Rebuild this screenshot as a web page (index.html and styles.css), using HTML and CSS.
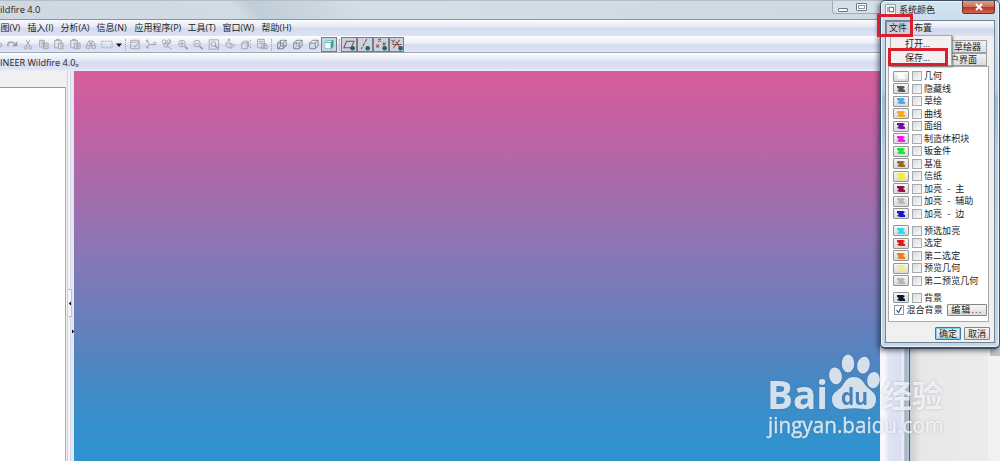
FILE: index.html
```html
<!DOCTYPE html>
<html lang="zh-CN">
<head>
<meta charset="utf-8">
<title>Wildfire 4.0</title>
<link rel="stylesheet" href="styles.css">
</head>
<body>
<div class="screen">
  <main class="app">
    <header class="titlebar"><span>ildfire 4.0</span><div class="winbtns"><i class="min"></i><i class="max"></i></div></header>
    <nav class="menubar"><span>图(V)</span><span>插入(I)</span><span>分析(A)</span><span>信息(N)</span><span>应用程序(P)</span><span>工具(T)</span><span>窗口(W)</span><span>帮助(H)</span></nav>
    <div class="toolbar">
      <svg class="edge" viewBox="0 0 4 16"><circle cx="0" cy="8" r="1.8"/></svg>
      <svg class="ic" viewBox="0 0 16 16"><path stroke-width="1.500" d="M4 10C2 5 9 4 12 8M13 5v4H9"/></svg>
      <svg class="ic" viewBox="0 0 16 16"><path d="M6 3l4 7M10 3L6 10"/><circle cx="5.500" cy="11.500" r="1.500"/><circle cx="10.500" cy="11.500" r="1.500"/></svg>
      <svg class="ic" viewBox="0 0 16 16"><path class="soft" d="M3.500 3.500h5v7h-5zM7.500 6.500h5v6h-5z"/><path d="M5 5.500h3M5 7.500h2M9 8.500h3M9 10.500h3"/></svg>
      <svg class="ic" viewBox="0 0 16 16"><path class="soft" d="M3.500 3.500h7v8h-7z"/><path class="soft" d="M7.500 6.500h5v6h-5z"/><path d="M5.500 3.500v-1h3v1M9 8.500h3M9 10.500h3"/></svg>
      <svg class="ic" viewBox="0 0 16 16"><path class="soft" d="M3.500 3.500h7v8h-7z"/><path class="soft" d="M7.500 6.500h6v6h-6z"/><path d="M5.500 3.500v-1h3v1M9 8.500h4M9 10.500h4M10.500 7v5"/></svg>
      <svg class="ic" viewBox="0 0 16 16"><path d="M6 4L3 9v3h4V4zM10 4l3 5v3H9V4zM7 7h2M4 9h3M9 9h3"/></svg>
      <svg class="ic" viewBox="0 0 16 16"><path stroke-dasharray="2 1.200" d="M2.500 4.500h11v7h-11z"/></svg>
      <svg class="drop" viewBox="0 0 8 16"><path d="M1 6.500h6L4 10z"/></svg>
      <i class="sep first"></i>
      <svg class="ic" viewBox="0 0 16 16"><path d="M3.500 3.500h9v9h-9zM3.500 5.500h9M7 9l1 2 4-5"/></svg>
      <svg class="ic" viewBox="0 0 16 16"><path d="M4 4l2 4-2 3M6 8h7"/><circle cx="4" cy="4" r="1"/><circle cx="12" cy="7" r="1.300"/><circle cx="4" cy="11" r="1"/></svg>
      <svg class="ic" viewBox="0 0 16 16"><circle cx="5" cy="5" r="2"/><circle cx="10" cy="5" r="2"/><circle cx="7" cy="9" r="2"/><path d="M9 10l4 3M12 3l-4 7"/></svg>
      <svg class="ic" viewBox="0 0 16 16"><circle cx="7" cy="7" r="3.500"/><path d="M5 7h4M7 5v4"/><path stroke-width="2" d="M10 10l3 3"/></svg>
      <svg class="ic" viewBox="0 0 16 16"><circle cx="7" cy="7" r="3.500"/><path d="M5 7h4"/><path stroke-width="2" d="M10 10l3 3"/></svg>
      <svg class="ic" viewBox="0 0 16 16"><path d="M3 3h10v10H3z"/><circle cx="7.500" cy="7.500" r="2.500"/><path stroke-width="1.500" d="M9 9l3 3"/></svg>
      <svg class="ic" viewBox="0 0 16 16"><path d="M4 6l5 1v5l-5-2zM7 6V2M9 7l4 2-4 3M5.500 4L7 2l1.500 2"/></svg>
      <svg class="ic" viewBox="0 0 16 16"><path d="M3.500 6.500h6v6h-6zM3.500 6.500l2-2h5l-1 2M11 5v6M13 3v2M13 7v1M13 10v2"/></svg>
      <svg class="ic" viewBox="0 0 16 16"><path class="soft" d="M3.500 2.500h7v9h-7z"/><path d="M5 5h4M5 7h3M7.500 8.500h6v4h-6zM9 8V7h3v1"/><circle cx="10.500" cy="10.500" r="1"/></svg>
      <i class="sep gap"></i>
      <svg class="ic dark" viewBox="0 0 16 16"><path d="M3.500 6.500h6v6h-6zM6.500 3.500h6v6h-6zM3.500 6.500l3-3M9.500 6.500l3-3M3.500 12.500l3-3M9.500 12.500l3-3"/></svg>
      <svg class="ic dark" viewBox="0 0 16 16"><path d="M3.500 6.500h6v6h-6zM3.500 6.500l3-3h6v6l-3 3M9.500 6.500l3-3"/><path opacity=".4" d="M6.500 4v5.500h5M6.500 9.500l-3 3"/></svg>
      <svg class="ic dark" viewBox="0 0 16 16"><path d="M3.500 6.500h6v6h-6zM3.500 6.500l3-3h6v6l-3 3M9.500 6.500l3-3"/></svg>
      <svg class="ic on" viewBox="1.500 1.500 13 13"><path fill="#fff" stroke="#8cc" d="M4 6h6v6H4z"/><path fill="#bff" stroke="#6bb" d="M4 6l2-2h6l-2 2z"/><path fill="#299f98" stroke="#299f98" d="M10.500 6L12 4v6l-1.500 2z"/></svg>
      <i class="sep last"></i>
      <svg class="ic on datum" viewBox="1 1 14 14"><path d="M5.500 4.500h8l-3 7h-8z"/><circle class="eye" cx="12" cy="12" r="1.900"/></svg>
      <svg class="ic on datum" viewBox="1 1 14 14"><path stroke-dasharray="4 1" d="M10 2L4 13"/><circle class="eye" cx="11" cy="12" r="1.900"/></svg>
      <svg class="ic on datum" viewBox="1 1 14 14"><path d="M5 2l3 3M8 2L5 5M3 8l3 3M6 8l-3 3M10 6l3 3M13 6l-3 3"/><circle class="eye" cx="12" cy="12" r="1.900"/></svg>
      <svg class="ic on datum" viewBox="1 1 14 14"><path d="M3 8h10M11 3l-7 9M7 5l4 6"/><path stroke="#666" d="M2 3l2 2 2-2M4 5v2"/><circle class="eye" cx="12" cy="12" r="1.900"/></svg>
    </div>
    <div class="message">INEER Wildfire 4.0。</div>
    <section class="work">
      <aside class="tree"><div></div></aside>
      <div class="splitter"><i></i><svg viewBox="0 0 7 50"><path d="M3 14.500v4L.8 16.500zM4 42.500v4L6.200 44.500z"/></svg></div>
      <div class="canvas"></div>
      <div class="scroll"></div>
      <div class="outside"><i></i></div>
    </section>
  </main>

  <section class="dialog">
    <header class="dtitle"><svg viewBox="0 0 12 12"><path d="M.5.5h11v11H.5z" fill="#f8fbfd" stroke="#8199ab"/><path d="M4.500 3.500h5v5h-5z" fill="#fff" stroke="#356"/><path d="M3 3v6" stroke="#d66"/></svg><span>系统颜色</span><b class="close"><svg viewBox="0 0 10 8"><path d="M2 1l6 6M8 1L2 7"/></svg></b></header>
    <div class="dbody">
      <nav class="dmenu"><span class="active">文件</span><span>布置</span></nav>
      <div class="tabs"><span>草绘器</span><span>户界面</span></div>
      <div class="list">
        <div class="row"><b class="sw c1"><svg viewBox="0 0 10 8"><path d="M1 1h6l2 1-2 2 2 1v2H4L1 6l2-2-2-1z"/></svg></b><i class="cb"></i><span>几何</span></div>
        <div class="row"><b class="sw c2"><svg viewBox="0 0 10 8"><path d="M1 1h6l2 1-2 2 2 1v2H4L1 6l2-2-2-1z"/></svg></b><i class="cb"></i><span>隐藏线</span></div>
        <div class="row"><b class="sw c3"><svg viewBox="0 0 10 8"><path d="M1 1h6l2 1-2 2 2 1v2H4L1 6l2-2-2-1z"/></svg></b><i class="cb"></i><span>草绘</span></div>
        <div class="row"><b class="sw c4"><svg viewBox="0 0 10 8"><path d="M1 1h6l2 1-2 2 2 1v2H4L1 6l2-2-2-1z"/></svg></b><i class="cb"></i><span>曲线</span></div>
        <div class="row"><b class="sw c5"><svg viewBox="0 0 10 8"><path d="M1 1h6l2 1-2 2 2 1v2H4L1 6l2-2-2-1z"/></svg></b><i class="cb"></i><span>面组</span></div>
        <div class="row"><b class="sw c6"><svg viewBox="0 0 10 8"><path d="M1 1h6l2 1-2 2 2 1v2H4L1 6l2-2-2-1z"/></svg></b><i class="cb"></i><span>制造体积块</span></div>
        <div class="row"><b class="sw c7"><svg viewBox="0 0 10 8"><path d="M1 1h6l2 1-2 2 2 1v2H4L1 6l2-2-2-1z"/></svg></b><i class="cb"></i><span>钣金件</span></div>
        <div class="row"><b class="sw c8"><svg viewBox="0 0 10 8"><path d="M1 1h6l2 1-2 2 2 1v2H4L1 6l2-2-2-1z"/></svg></b><i class="cb"></i><span>基准</span></div>
        <div class="row"><b class="sw c9"><svg viewBox="0 0 10 8"><path d="M1 1h6l2 1-2 2 2 1v2H4L1 6l2-2-2-1z"/></svg></b><i class="cb"></i><span>信纸</span></div>
        <div class="row"><b class="sw c10"><svg viewBox="0 0 10 8"><path d="M1 1h6l2 1-2 2 2 1v2H4L1 6l2-2-2-1z"/></svg></b><i class="cb"></i><span>加亮 - 主</span></div>
        <div class="row"><b class="sw c11"><svg viewBox="0 0 10 8"><path d="M1 1h6l2 1-2 2 2 1v2H4L1 6l2-2-2-1z"/></svg></b><i class="cb"></i><span>加亮 - 辅助</span></div>
        <div class="row"><b class="sw c12"><svg viewBox="0 0 10 8"><path d="M1 1h6l2 1-2 2 2 1v2H4L1 6l2-2-2-1z"/></svg></b><i class="cb"></i><span>加亮 - 边</span></div>
        <div class="row group"><b class="sw c13"><svg viewBox="0 0 10 8"><path d="M1 1h6l2 1-2 2 2 1v2H4L1 6l2-2-2-1z"/></svg></b><i class="cb"></i><span>预选加亮</span></div>
        <div class="row"><b class="sw c14"><svg viewBox="0 0 10 8"><path d="M1 1h6l2 1-2 2 2 1v2H4L1 6l2-2-2-1z"/></svg></b><i class="cb"></i><span>选定</span></div>
        <div class="row"><b class="sw c15"><svg viewBox="0 0 10 8"><path d="M1 1h6l2 1-2 2 2 1v2H4L1 6l2-2-2-1z"/></svg></b><i class="cb"></i><span>第二选定</span></div>
        <div class="row"><b class="sw c16"><svg viewBox="0 0 10 8"><path d="M1 1h6l2 1-2 2 2 1v2H4L1 6l2-2-2-1z"/></svg></b><i class="cb"></i><span>预览几何</span></div>
        <div class="row"><b class="sw c17"><svg viewBox="0 0 10 8"><path d="M1 1h6l2 1-2 2 2 1v2H4L1 6l2-2-2-1z"/></svg></b><i class="cb"></i><span>第二预览几何</span></div>
        <div class="row group"><b class="sw c18"><svg viewBox="0 0 10 8"><path d="M1 1h6l2 1-2 2 2 1v2H4L1 6l2-2-2-1z"/></svg></b><i class="cb"></i><span>背景</span></div>
        <div class="row blend"><svg class="cb" viewBox="0 0 8 8"><path d="M1.500 4l2 2.500L6.500 1"/></svg><span>混合背景</span><button class="edit">编辑...</button></div>
      </div>
      <footer class="actions"><button class="ok">确定</button><button>取消</button></footer>
    </div>
    <div class="popup"><span>打开...</span><span>保存...</span></div>
    <i class="mark mark-file"></i>
    <i class="mark mark-save"></i>
  </section>

  <svg class="watermark" viewBox="0 0 190 95">
    <g class="brand">
      <text x="7" y="59" class="bai" textLength="61" lengthAdjust="spacingAndGlyphs">Bai</text>
      <ellipse cx="75.500" cy="26" rx="6.300" ry="8.500" transform="rotate(-12 75 26)"/>
      <ellipse cx="88" cy="13.500" rx="6.200" ry="9"/>
      <ellipse cx="103.500" cy="15" rx="6.200" ry="8.500" transform="rotate(12 103 15)"/>
      <ellipse cx="113.500" cy="30" rx="6.300" ry="8.200" transform="rotate(10 113 30)"/>
      <path d="M94 27c6 0 9 4 12 9 5 5 10 7 10 13 0 9-6 11-12 10-7-1-13-1-20 0-7 1-12-3-12-10 0-7 7-8 11-14 3-5 5-8 11-8z"/>
      <text x="81" y="55" class="du" textLength="27" lengthAdjust="spacingAndGlyphs">du</text>
      <text x="121" y="57" class="exp" textLength="62" lengthAdjust="spacingAndGlyphs">经验</text>
      <text x="8" y="83" class="url" textLength="176" lengthAdjust="spacingAndGlyphs">jingyan.baidu.com</text>
    </g>
  </svg>
</div>
</body>
</html>
```
FILE: styles.css
```css
* { box-sizing: border-box; }
body { margin: 0; font-family: "Open Sans", "Noto Sans CJK SC", sans-serif; font-size: 9px; color: #222; }
.screen { position: relative; width: 1000px; height: 461px; overflow: hidden; }
.app { display: flex; flex-direction: column; height: 461px; }

.titlebar { display: flex; justify-content: space-between; height: 20px; padding-right: 114px; border-top: 1px solid #b5bfc6; border-bottom: 1px solid #8b979e; background: linear-gradient(50deg, transparent 24%, rgba(178,194,207,.55) 26%, transparent 36%), linear-gradient(90deg, #cdd8e2, #d3dee5 40%, #cbd8e2); line-height: 18px; font-size: 9.3px; }
.winbtns { display: flex; width: 54px; height: 13px; border: 1px solid #a0acb5; border-top: 0; border-radius: 0 0 3px 3px; background: #d6e0e8; }
.winbtns i { border-color: #6c7780; }
.min { width: 10px; height: 4px; margin: 7px 8px 0 5px; border: 1px solid; border-radius: 1px; background: #fff; }
.max { width: 11px; height: 8px; margin-top: 2px; border: 1px solid; border-radius: 1px; background: #fff; box-shadow: inset 0 0 0 1px #fff, inset 0 0 0 2px #8f989f; }

.menubar { display: flex; gap: 8px; height: 16px; padding-left: .5px; background: linear-gradient(#fafbfe, #e4e9f6 42%, #d3dbee 52%, #dde3f4); line-height: 16px; white-space: nowrap; }
.menubar span:nth-child(1) { width: 19px; }
.menubar span:nth-child(2) { width: 25px; }
.menubar span:nth-child(3) { width: 28px; }
.menubar span:nth-child(4) { width: 30px; }
.menubar span:nth-child(5) { width: 45px; }
.menubar span:nth-child(6) { width: 27px; }
.menubar span:nth-child(7) { width: 31px; }

.toolbar { display: flex; align-items: center; height: 17px; border-top: 1px solid #fff; border-bottom: 1px solid #9fa6b4; background: linear-gradient(#fafbfe, #e8edf8 42%, #d5dcf0 52%, #dde4f5); }
.toolbar svg { flex: none; fill: none; stroke: #9b9da2; stroke-width: .9; }
.edge { width: 4px; height: 16px; fill: #777; }
.ic { width: 15.8px; height: 15px; }
.toolbar .dark { stroke: #747981; }
.toolbar .soft { fill: #e4e5e8; }
.toolbar .drop { width: 8px; height: 16px; fill: #111; stroke: none; }
.sep { flex: none; height: 12px; margin: 0 1.5px; border-left: 1px dotted #9aa3b5; }
.sep.first { margin: 0 1.7px 0 2px; }
.sep.gap { margin: 0 1.7px 0 1.8px; }
.sep.last { margin: 0 1.5px; }
.ic.on { border: 1px solid #737c88; background: #cbd2dd; }
.toolbar .datum { stroke: #934d40; stroke-width: 1.1; }
.toolbar .eye { fill: #24695f; stroke: #24574f; }

.message { height: 18px; padding-top: 3px; background: linear-gradient(#fff, #f2f4fa 13%, #e2e6f4 42%, #d5daee 55%, #dfe4f4 90%, #eceef4); font-size: 9.1px; line-height: 14px; }

.work { display: flex; flex: 1; }
.tree { width: 67px; padding-top: 16px; background: #f0f0f0; }
.tree div { width: 66px; height: 100%; border-top: 1px solid #999; border-right: 1px solid #aaa; background: #fff; }
.splitter { position: relative; width: 7px; border-left: 1px solid #d0d2d8; background: linear-gradient(90deg, #f5f6fb 30%, #c6cad5 45%, #e9ecf6 55%, #dde4f2); }
.splitter i, .splitter svg { position: absolute; left: 0; top: 216px; width: 7px; height: 50px; }
.splitter i { top: 218px; width: 4px; height: 28px; border: 1px solid #bdc2cc; border-left: 0; background: #f5f5f8; }
.canvas { width: 806px; background: linear-gradient(#d65e9a, #c75fa0 10%, #a76bab 30%, #8b76b4 45%, #677fbb 65%, #4489c5 80%, #2d94d0 98%); }
.scroll { width: 30px; border-right: 1px solid #4e5c70; background: linear-gradient(90deg, #f8f9fd 15%, #e0e4f4 30%, #d9def2 70%, #f1f3fa 80%, #a3b6ca 86%); box-shadow: inset -2px 0 #afc3d5; }
.outside { display: flex; flex: 1; justify-content: flex-end; background: linear-gradient(90deg, #ccc, #e8e8e8 12%, #ebebeb 86%, #f2f2f2 87%); }
.outside i { width: 10px; height: 285px; background: #c4c4c4; }

.dialog { position: absolute; left: 880px; top: 0; width: 120px; height: 349px; padding: 0 4px 5px; border: 1px solid #3f4e5c; border-width: 1px 1px 2px; border-radius: 5px; background: linear-gradient(#d2e2ef, #b5d0e8 26%, #9bbddb 28%, #b8d0e5 45%, #c2d7e7); box-shadow: inset 0 0 0 1px #edf5fa, -2px 2px 5px rgba(15,25,45,.55); }
.dtitle { display: flex; align-items: flex-start; height: 19px; }
.dtitle > svg { width: 11px; height: 11px; margin-top: 3px; fill: none; }
.dtitle span { width: 36px; margin: 0 0 0 3px; line-height: 17px; white-space: nowrap; }
.close { display: flex; align-items: center; justify-content: center; width: 33px; height: 13px; margin-left: 27px; border: 1px solid #6b302c; border-top: 0; border-radius: 0 0 3px 3px; background: linear-gradient(#dc9d8c, #cc6e5e 48%, #b83525 52%, #cf6650); }
.close svg { width: 10px; height: 8px; fill: none; stroke: #fff; stroke-width: 2; }
.dbody { display: flex; flex-direction: column; height: 323px; border: 1px solid #738494; background: #f0f0f0; }
.dmenu { display: flex; height: 15px; background: linear-gradient(#fafbfe, #e4e9f6 42%, #d1d8eb 55%, #dde3f4); line-height: 14px; }
.dmenu span { width: 24px; padding-left: 3px; }
.dmenu .active { width: 25px; padding-left: 2px; border: 1px solid #7f8793; background: #cbd0da; line-height: 12px; }
.tabs { display: flex; flex-direction: column; align-items: flex-end; height: 30px; padding: 4px 7px 0 0; }
.tabs span { width: 38px; height: 13px; padding-left: 4px; border: 1px solid #a0a0a0; background: linear-gradient(#f2f2f2, #ddd); line-height: 11px; }
.tabs span + span { width: 44px; padding-left: 6px; }
.list { height: 256px; margin: 0 5px 0 2px; padding: 3px 0 0 4px; border: 1px solid #aaa; background: #fff; }
.row { display: flex; align-items: center; height: 12.5px; font-size: 9px; line-height: 12px; white-space: nowrap; word-spacing: 2.7px; letter-spacing: .05px; }
.row.group { margin-top: 4.5px; }
.sw { display: flex; align-items: center; justify-content: center; width: 15.5px; height: 11px; border: 1px solid #969696; border-radius: 1px; background: linear-gradient(#f6f6f6, #d9d9d9); }
.sw svg { width: 10px; height: 8px; fill: currentColor; }
.cb { flex: none; width: 10px; height: 10px; margin: 0 2.5px 0 3px; border: 1px solid #a5aaac; background: linear-gradient(135deg, #d7dbde, #fafafa); }
.blend { padding-left: 1px; }
.blend .cb { margin: 0 2.5px 0 0; border-color: #8f9b9f; background: #fff; fill: none; stroke: #304b8b; stroke-width: 1.2; }
.c1 { color: #fff; } .c2 { color: #555; } .c3 { color: #4da9ed; } .c4 { color: #f5aa16; }
.c5 { color: #700c9e; } .c6 { color: #f215ec; } .c7 { color: #19e335; } .c8 { color: #966b25; }
.c9 { color: #f7f01b; } .c10 { color: #930c40; } .c11 { color: #b9b9b9; } .c12 { color: #1216cc; }
.c13 { color: #28dfe8; } .c14 { color: #e31717; } .c15 { color: #f47c12; } .c16 { color: #f0ed91; }
.c17 { color: #b7b7b7; } .c18 { color: #071633; }
button { height: 12px; padding: 0; border: 1px solid #858585; border-radius: 1px; background: linear-gradient(#f5f5f5, #ebebeb 50%, #d9d9d9); color: #222; font: 9px/10px "Open Sans", "Noto Sans CJK SC", sans-serif; }
.edit { width: 40px; margin-left: 4px; letter-spacing: 1.2px; }
.actions { display: flex; gap: 3px; justify-content: flex-end; padding: 5px 4px 0 0; }
.actions button { width: 26px; height: 13px; }
.actions .ok { border-color: #367f9d; box-shadow: inset 0 0 0 1px #7cd0ee; }
.popup { position: absolute; left: 9px; top: 34px; width: 62px; height: 31px; padding: 1px 0 0 14px; border: 1px solid #aaa; background: #f1f1f1; box-shadow: 1px 1px 2px #777; }
.popup span { display: block; height: 14px; line-height: 14px; }
.mark { position: absolute; border: 3px solid #d91f2b; }
.mark-file { left: -4px; top: 13px; width: 36px; height: 23px; }
.mark-save { left: 7px; top: 47px; width: 60px; height: 18px; }

.watermark { position: absolute; left: 760px; top: 350px; width: 190px; height: 95px; filter: drop-shadow(0 0 1px rgba(90,90,100,.4)); }
.brand { fill: #f8fbfe; opacity: .8; }
.bai { font: bold 39px "Open Sans", sans-serif; }
.du { font: bold 24px "Open Sans", sans-serif; fill: #4a85bd; }
.exp { font: bold 31px "Noto Sans CJK SC", sans-serif; }
.url { font: 21px "Open Sans", sans-serif; stroke: #f8fbfe; stroke-width: .4; }
```
